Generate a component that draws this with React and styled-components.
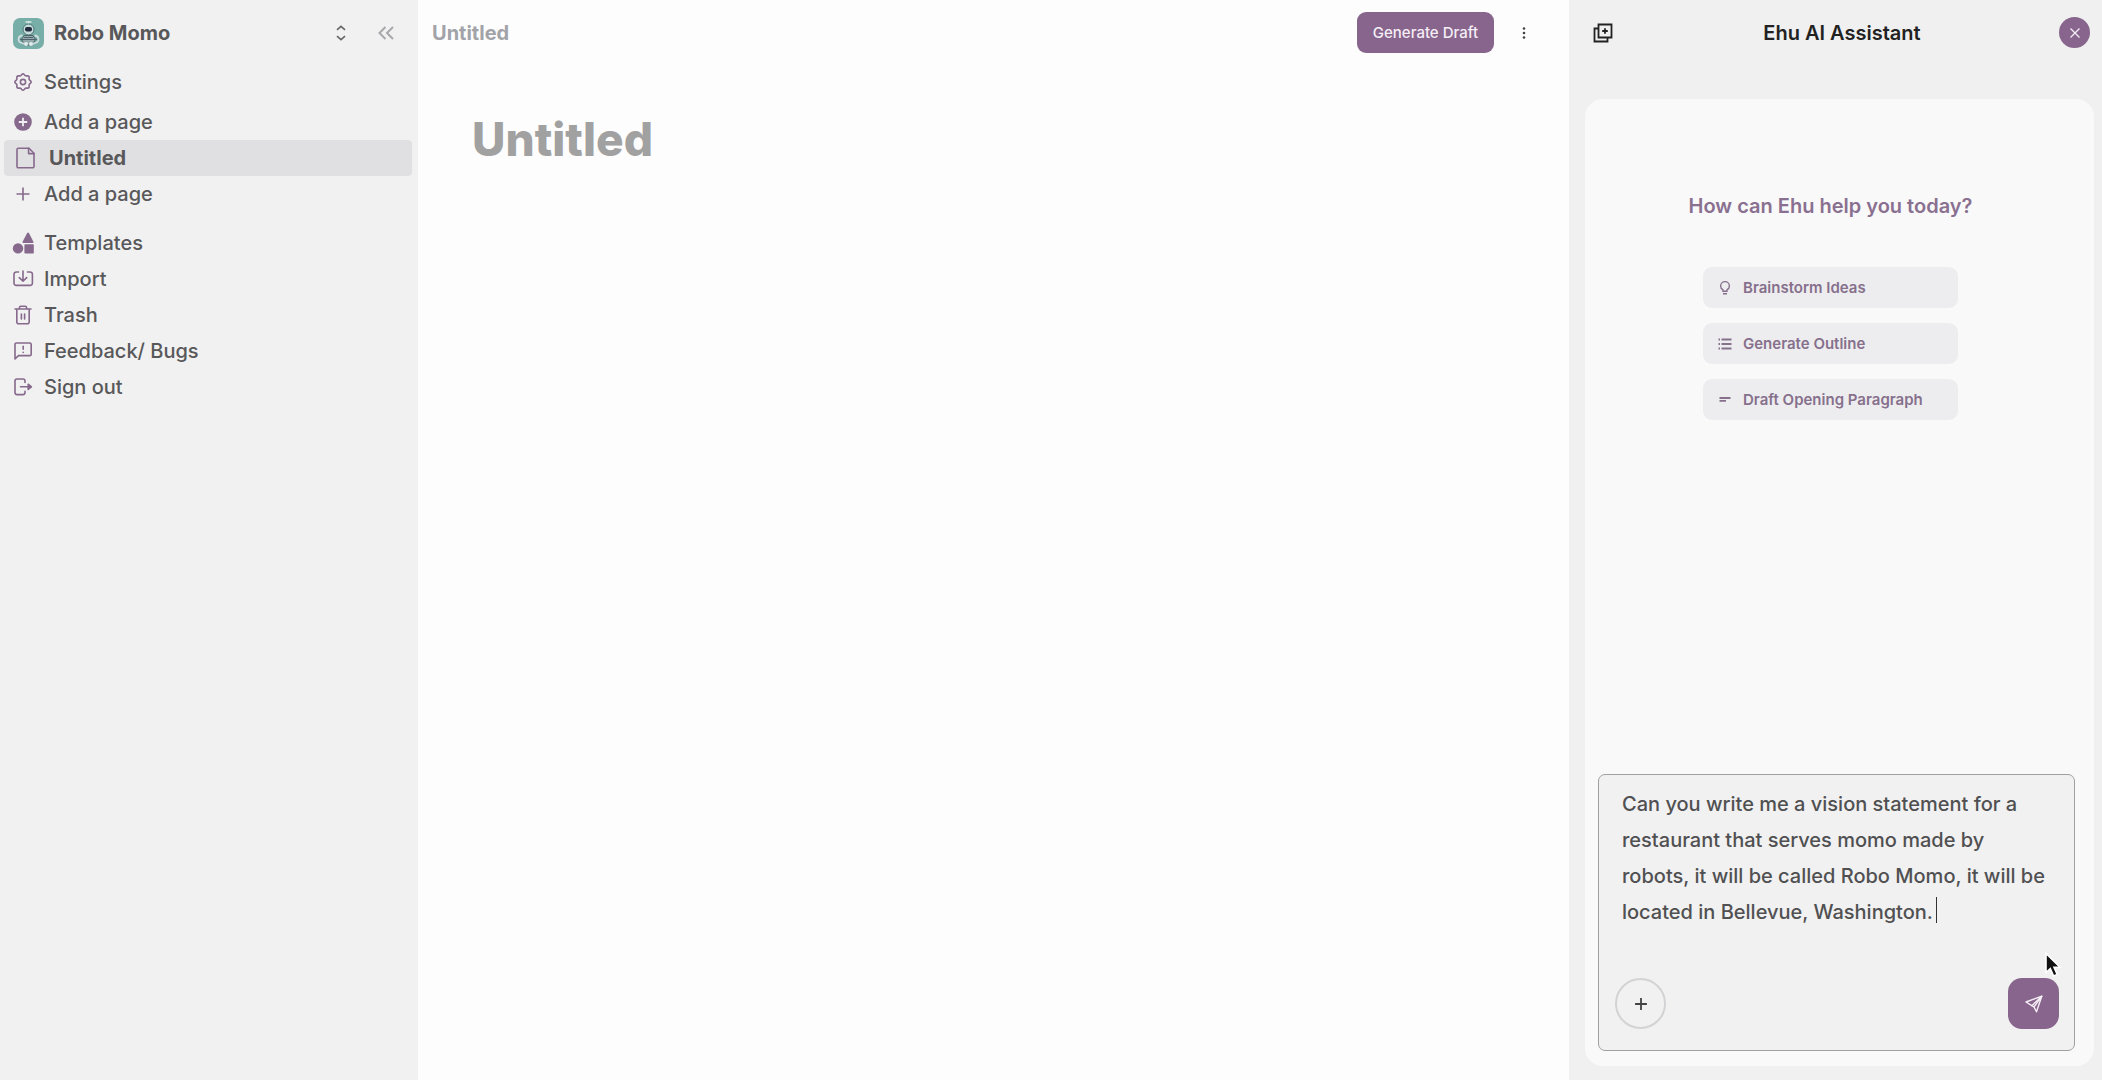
import { useState } from "react";
import styled, { createGlobalStyle } from "styled-components";

const GlobalStyle = createGlobalStyle`
  * {
    box-sizing: border-box;
  }

  body {
    margin: 0;
    font-family: Inter, "Liberation Sans", sans-serif;
    color: #58585a;
  }

  button, textarea, input {
    font-family: inherit;
  }
`;

const Layout = styled.div`
  display: grid;
  grid-template-columns: 418px minmax(0, 1fr) 533px;
  min-height: 100vh;
  background: #fdfdfd;
`;

const Sidebar = styled.aside`
  background: #f1f1f1;
  padding: 0 6px 0 4px;
`;

const Workspace = styled.div`
  display: flex;
  align-items: center;
  height: 64px;
  padding: 2px 18px 0 9px;
`;

const WorkspaceName = styled.span`
  flex: 1;
  margin-left: 10px;
  font-size: 20px;
  font-weight: 700;
`;

const IconButton = styled.button`
  display: flex;
  padding: 0;
  border: none;
  background: none;
  color: ${({ $color }) => $color || "#666"};
  margin-left: ${({ $gap }) => $gap || 0}px;
  cursor: pointer;
`;

const Group = styled.ul`
  list-style: none;
  margin: 0 0 ${({ $gap }) => $gap}px;
  padding: 0;
`;

const NavLink = styled.a`
  display: flex;
  align-items: center;
  gap: ${({ $active }) => ($active ? 12 : 10)}px;
  height: 36px;
  padding-left: ${({ $active }) => ($active ? 11 : 8)}px;
  border-radius: 4px;
  background: ${({ $active }) => ($active ? "#e0e0e2" : "transparent")};
  color: inherit;
  font-size: 20px;
  font-weight: ${({ $active }) => ($active ? 700 : 500)};
  text-decoration: none;

  svg {
    width: 22px;
    height: 22px;
    flex: none;
    color: #86698c;
  }
`;

const Main = styled.main`
  min-width: 0;
`;

const TopBar = styled.header`
  display: flex;
  align-items: center;
  height: 65px;
  padding: 0 37px 0 14px;
`;

const Crumb = styled.span`
  flex: 1;
  font-size: 20px;
  font-weight: 700;
  color: #a2a3a8;
`;

const DraftButton = styled.button`
  height: 41px;
  padding: 0 16px;
  border: none;
  border-radius: 9px;
  background: #88658d;
  color: #f5eef6;
  font-size: 15px;
  font-weight: 500;
  cursor: pointer;
`;

const PageTitle = styled.h1`
  margin: 46px 54px;
  font-size: 46px;
  line-height: 56px;
  font-weight: 800;
  color: #a1a1a1;
`;

const Panel = styled.aside`
  display: flex;
  flex-direction: column;
  background: #f0f0f0;
  padding: 0 8px 14px 16px;
`;

const PanelHeader = styled.header`
  display: grid;
  grid-template-columns: 32px 1fr 32px;
  align-items: center;
  height: 65px;
  padding: 0 3px 0 8px;
`;

const PanelTitle = styled.h2`
  margin: 0;
  font-size: 20px;
  font-weight: 600;
  text-align: center;
  color: #222;
`;

const CloseButton = styled.button`
  display: flex;
  align-items: center;
  justify-content: center;
  width: 31px;
  height: 31px;
  padding: 0;
  border: none;
  border-radius: 50%;
  background: #88658d;
  color: #f5eef6;
  cursor: pointer;
`;

const Chat = styled.section`
  flex: 1;
  display: flex;
  flex-direction: column;
  justify-content: space-between;
  margin-top: 34px;
  padding: 93px 19px 15px 13px;
  border-radius: 18px;
  background: #f9f9f9;
`;

const Suggestions = styled.div`
  display: flex;
  flex-direction: column;
  align-items: center;
  gap: 15px;
  padding-right: 12px;
`;

const Question = styled.h3`
  margin: 0 0 32px;
  font-size: 20px;
  line-height: 28px;
  font-weight: 600;
  color: #8a7090;
`;

const Suggestion = styled.button`
  display: flex;
  align-items: center;
  gap: 10px;
  width: 255px;
  height: 41px;
  padding: 0 14px;
  border: none;
  border-radius: 9px;
  background: #ededef;
  color: #86708c;
  font-size: 15px;
  font-weight: 600;
  cursor: pointer;

  svg {
    width: 16px;
    height: 16px;
  }
`;

const Composer = styled.form`
  position: relative;
  padding: 11px 15px 21px 16px;
  border: 1px solid #a0a0a2;
  border-radius: 7px;
  background: #f1f1f1;
`;

const Prompt = styled.textarea`
  display: block;
  width: 100%;
  height: 179px;
  padding: 0 6px 0 7px;
  border: none;
  outline: none;
  resize: none;
  overflow: hidden;
  background: none;
  color: #505052;
  font-size: 20px;
  font-weight: 500;
  line-height: 36px;
`;

const Caret = styled.span`
  position: absolute;
  left: 337px;
  top: 122px;
  width: 1px;
  height: 26px;
  background: #333;
`;

const Pointer = styled.svg`
  position: absolute;
  right: 11px;
  top: 177px;
`;

const Actions = styled.div`
  display: flex;
  justify-content: space-between;
  margin-top: 13px;
`;

const RoundButton = styled.button`
  display: flex;
  align-items: center;
  justify-content: center;
  width: 51px;
  height: 51px;
  padding: 0;
  border: 2px solid #d3d2d5;
  border-radius: 50%;
  background: transparent;
  color: #444;
  cursor: pointer;
`;

const SendButton = styled(RoundButton)`
  border: none;
  border-radius: 14px;
  background: #88658d;
  color: #f5eef6;
`;

const stroke = {
  viewBox: "0 0 22 22",
  fill: "none",
  stroke: "currentColor",
  strokeWidth: 1.6,
  strokeLinejoin: "round",
  strokeLinecap: "round",
};

// closed outline with eight soft teeth
const gearPoints = Array.from({ length: 96 }, (_, i) => {
  const angle = (i / 96) * Math.PI * 2;
  const radius = 7.4 + 0.7 * Math.cos(angle * 8);
  return `${(11 + radius * Math.cos(angle)).toFixed(2)},${(11 + radius * Math.sin(angle)).toFixed(2)}`;
}).join(" ");

const GearIcon = () => (
  <svg {...stroke}>
    <polygon points={gearPoints} />
    <circle cx="11" cy="11" r="2.6" />
  </svg>
);

const AddCircleIcon = () => (
  <svg viewBox="0 0 22 22">
    <circle cx="11" cy="11" r="8.8" fill="currentColor" />
    <path d="M11 6.8v8.4M6.8 11h8.4" stroke="#f1f1f1" strokeWidth="1.8" />
  </svg>
);

const FileIcon = () => (
  <svg {...stroke}>
    <path d="M3.4 1.2H14L19 6.2V19.4a1.400 1.400 0 0 1-1.400 1.400H3.400A1.400 1.400 0 0 1 2 19.400V2.600A1.400 1.400 0 0 1 3.400 1.200Z" />
    <path d="M13.600 1.200v5.400H19" />
  </svg>
);

const PlusIcon = ({ size, weight }) => (
  <svg {...stroke} width={size} height={size} strokeLinecap="butt" strokeWidth={weight || 1.6}>
    <path d="M11 4.500v13M4.500 11h13" />
  </svg>
);

const ShapesIcon = () => (
  <svg viewBox="0 0 22 22" fill="currentColor">
    <path d="M15.200 1.100a1 1 0 0 1 1.700 0L21.300 9.600a.9.900 0 0 1-.8 1.300h-9a.9.900 0 0 1-.8-1.300Z" />
    <circle cx="6" cy="16.400" r="5.200" />
    <rect x="12.400" y="12.200" width="9.400" height="9.400" rx="0.800" />
  </svg>
);

const ImportIcon = () => (
  <svg {...stroke}>
    <path d="M6.500 4H4.200A2.200 2.200 0 0 0 2 6.200v9A2.200 2.200 0 0 0 4.200 17.400h14a2.200 2.200 0 0 0 2.200-2.200v-9A2.200 2.200 0 0 0 18.200 4H15.500" />
    <path d="M11 3v10M7.300 9.600 11 13.200l3.700-3.600" />
  </svg>
);

const TrashIcon = () => (
  <svg {...stroke}>
    <path d="M3 5h16M7.400 5V3.800A1.600 1.600 0 0 1 9 2.200h4a1.600 1.600 0 0 1 1.600 1.600V5M4.800 5v12.800a2 2 0 0 0 2 2h8.400a2 2 0 0 0 2-2V5" />
    <path d="M9.400 10v5M12.600 10v5" />
  </svg>
);

const FeedbackIcon = () => (
  <svg {...stroke}>
    <path d="M3 19V4.400A1.400 1.400 0 0 1 4.400 3h13.400a1.400 1.400 0 0 1 1.400 1.400v9.800a1.400 1.400 0 0 1-1.400 1.400H6.400Z" />
    <path d="M11.200 6.200v3M11.200 12.200v.2" />
  </svg>
);

const SignOutIcon = () => (
  <svg {...stroke}>
    <path d="M13 6.400V5a2 2 0 0 0-2-2H5a2 2 0 0 0-2 2v11.600a2 2 0 0 0 2 2h6a2 2 0 0 0 2-2v-1.400" />
    <path d="M8.500 10.800H18" />
    <path d="M16.200 8.200 19.400 10.800l-3.200 2.600Z" fill="currentColor" />
  </svg>
);

const SelectorIcon = () => (
  <svg width="10" height="16" viewBox="0 0 10 16" fill="none" stroke="currentColor" strokeWidth="1.600">
    <path d="M1 4.800 5 1.400l4 3.400M1 11.200l4 3.400 4-3.400" />
  </svg>
);

const CollapseIcon = () => (
  <svg width="16" height="14" viewBox="0 0 16 14" fill="none" stroke="currentColor" strokeWidth="2">
    <path d="M7.500 1 1.500 7l6 6M15 1 9 7l6 6" />
  </svg>
);

const DotsIcon = () => (
  <svg width="16" height="16" viewBox="0 0 16 16" fill="currentColor">
    <circle cx="8" cy="3.500" r="1.300" />
    <circle cx="8" cy="8" r="1.300" />
    <circle cx="8" cy="12.500" r="1.300" />
  </svg>
);

const NewChatIcon = () => (
  <svg width="20" height="20" viewBox="0 0 20 20" fill="none" stroke="currentColor" strokeWidth="1.800">
    <path d="M5.500 1.500h13v13h-13zM5.500 5.500h-4v13h13v-4M12 5.200v5.600M9.200 8h5.600" />
  </svg>
);

const CloseIcon = () => (
  <svg width="14" height="14" viewBox="0 0 14 14" fill="none" stroke="currentColor" strokeWidth="1.300">
    <path d="M2.500 2.500l9 9M11.500 2.500l-9 9" />
  </svg>
);

const BulbIcon = () => (
  <svg viewBox="0 0 16 16" fill="none" stroke="currentColor" strokeWidth="1.400">
    <path d="M6 11.200V9.800C4.600 9 3.600 7.600 3.600 6a4.400 4.400 0 0 1 8.800 0c0 1.600-1 3-2.400 3.800v1.400ZM6 13.800h4" />
  </svg>
);

const ListIcon = () => (
  <svg viewBox="0 0 16 16" fill="none" stroke="currentColor" strokeWidth="1.800">
    <path d="M4.500 3.500H14.500M4.500 8H14.500M4.500 12.500H14.500M1.500 3.500h1.500M1.500 8h1.500M1.500 12.500h1.500" />
  </svg>
);

const ParagraphIcon = () => (
  <svg viewBox="0 0 16 16" fill="none" stroke="currentColor" strokeWidth="1.800">
    <path d="M2.500 6h11M2.500 8.800h6.500" />
  </svg>
);

const SendIcon = () => (
  <svg width="18" height="18" viewBox="0 0 18 18" fill="none" stroke="currentColor" strokeWidth="1.400" strokeLinejoin="round">
    <path d="M16.800 1.200 1 7l5.800 3.700Z" />
    <path d="M16.800 1.200 11.500 16.800 9 12Z" />
    <path d="M6.800 10.700 9 12" />
  </svg>
);

const Avatar = () => (
  <svg width="31" height="31" viewBox="0 0 31 31">
    <rect width="31" height="31" rx="7" fill="#78aea8" />
    <path d="M15.500 3v4M12.500 4h6" stroke="#d5e7e5" strokeWidth="1.400" />
    <circle cx="15.500" cy="11.500" r="5.500" fill="#c6dbdb" stroke="#47706f" />
    <rect x="12" y="9" width="7" height="4.600" rx="2" fill="#222b3b" />
    <path d="M11 17.500h9l2.500 4-3 5.500h-8l-3-5.500Z" fill="#93a9ac" stroke="#476664" />
    <path d="M9.500 17.500c-4 0-5 4-3 6.500l5 2M21.500 17.500c4 0 5 4 3 6.500l-5 2" fill="none" stroke="#d0dddf" strokeWidth="1.800" />
    <path d="M7 21.500h17M11 19.500h9" stroke="#51636e" strokeWidth="1.200" />
    <circle cx="13" cy="26" r="2" fill="#e0eced" />
    <circle cx="18" cy="26" r="2" fill="#e0eced" />
  </svg>
);

const pages = [
  { label: "Add a page", icon: <AddCircleIcon /> },
  { label: "Untitled", icon: <FileIcon />, active: true },
  { label: "Add a page", icon: <PlusIcon /> },
];

const tools = [
  { label: "Templates", icon: <ShapesIcon /> },
  { label: "Import", icon: <ImportIcon /> },
  { label: "Trash", icon: <TrashIcon /> },
  { label: "Feedback/ Bugs", icon: <FeedbackIcon /> },
  { label: "Sign out", icon: <SignOutIcon /> },
];

const suggestions = [
  { label: "Brainstorm Ideas", icon: <BulbIcon /> },
  { label: "Generate Outline", icon: <ListIcon /> },
  { label: "Draft Opening Paragraph", icon: <ParagraphIcon /> },
];

function NavGroup({ items, gap }) {
  return (
    <Group $gap={gap}>
      {items.map((item, index) => (
        <li key={index}>
          <NavLink href="#" $active={item.active}>
            {item.icon}
            {item.label}
          </NavLink>
        </li>
      ))}
    </Group>
  );
}

export default function App() {
  const [prompt, setPrompt] = useState(
    "Can you write me a vision statement for a restaurant that serves momo made by robots, it will be called Robo Momo, it will be located in Bellevue, Washington."
  );

  return (
    <>
      <GlobalStyle />
      <Layout>
        <Sidebar>
          <Workspace>
            <Avatar />
            <WorkspaceName>Robo Momo</WorkspaceName>
            <IconButton aria-label="Switch workspace">
              <SelectorIcon />
            </IconButton>
            <IconButton aria-label="Collapse sidebar" $color="#a8a8ac" $gap={32}>
              <CollapseIcon />
            </IconButton>
          </Workspace>
          <nav>
            <NavGroup items={[{ label: "Settings", icon: <GearIcon /> }]} gap={4} />
            <NavGroup items={pages} gap={13} />
            <NavGroup items={tools} gap={0} />
          </nav>
        </Sidebar>

        <Main>
          <TopBar>
            <Crumb>Untitled</Crumb>
            <DraftButton>Generate Draft</DraftButton>
            <IconButton aria-label="More options" $color="#444" $gap={22}>
              <DotsIcon />
            </IconButton>
          </TopBar>
          <PageTitle>Untitled</PageTitle>
        </Main>

        <Panel>
          <PanelHeader>
            <IconButton aria-label="New chat" $color="#222">
              <NewChatIcon />
            </IconButton>
            <PanelTitle>Ehu AI Assistant</PanelTitle>
            <CloseButton aria-label="Close assistant">
              <CloseIcon />
            </CloseButton>
          </PanelHeader>
          <Chat>
            <Suggestions>
              <Question>How can Ehu help you today?</Question>
              {suggestions.map((item) => (
                <Suggestion key={item.label}>
                  {item.icon}
                  {item.label}
                </Suggestion>
              ))}
            </Suggestions>
            <Composer onSubmit={(e) => e.preventDefault()}>
              <Prompt
                aria-label="Message"
                spellCheck={false}
                value={prompt}
                onChange={(e) => setPrompt(e.target.value)}
              />
              <Caret />
              <Actions>
                <RoundButton type="button" aria-label="Attach">
                  <PlusIcon size={20} weight={2} />
                </RoundButton>
                <SendButton type="submit" aria-label="Send">
                  <SendIcon />
                </SendButton>
              </Actions>
              <Pointer width="19" height="26" viewBox="0 0 19 26">
                <path
                  d="M2 1.500v19l4.300-4 3.300 7.500 3.600-1.600-3.200-7.200h6Z"
                  fill="#111"
                  stroke="#fff"
                  strokeWidth="1.600"
                />
              </Pointer>
            </Composer>
          </Chat>
        </Panel>
      </Layout>
    </>
  );
}
